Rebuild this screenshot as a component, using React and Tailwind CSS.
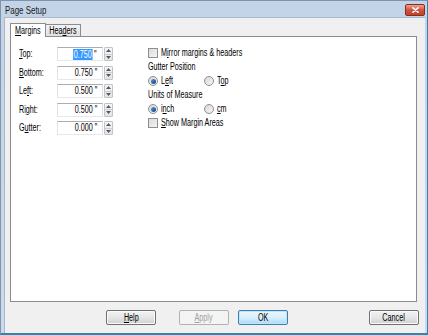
const font = "font-['Liberation_Sans',Arial,sans-serif]";

// text is drawn narrow like the original Tahoma dialog
function T({ children, o = "origin-left", className = "" }) {
  return (
    <span
      className={
        "inline-block whitespace-nowrap scale-x-[0.72] leading-none " + o + " " + className
      }
    >
      {children}
    </span>
  );
}

function U({ children }) {
  return <span className="underline underline-offset-[1px]">{children}</span>;
}

function Spinner() {
  return (
    <div className="ml-[1px] w-[9px] h-[14px] flex flex-col border border-[#c3c3c3] rounded-[1px] bg-gradient-to-b from-[#f6f6f6] to-[#e4e4e4]">
      <div className="flex-1 flex items-center justify-center border-b border-[#cfcfcf]">
        <svg width="5" height="3" viewBox="0 0 5 3">
          <path d="M0 3 L2.5 0 L5 3 Z" fill="#4a5a6a" />
        </svg>
      </div>
      <div className="flex-1 flex items-center justify-center">
        <svg width="5" height="3" viewBox="0 0 5 3">
          <path d="M0 0 L2.5 3 L5 0 Z" fill="#4a5a6a" />
        </svg>
      </div>
    </div>
  );
}

function Field({ label, value, selected }) {
  return (
    <div className="flex items-center h-[14px]">
      <span className="w-[38px] flex">
        <T>{label}</T>
      </span>
      <div className="w-[46px] h-[14px] bg-white border border-[#abadb3] border-l-[#e2e3ea] border-r-[#dbdfe6] border-b-[#e3e9ef] flex items-center justify-end pr-[5px]">
        {selected ? (
          <T o="origin-right" className="flex items-center">
            <span className="bg-[#3399ff] text-white px-[1px] leading-[11px]">{value}</span>
            <span className="w-[1.4px] h-[11px] bg-black mr-[2px]" />
            <span>"</span>
          </T>
        ) : (
          <T o="origin-right">{value} "</T>
        )}
      </div>
      <Spinner />
    </div>
  );
}

function Check({ children }) {
  return (
    <div className="flex items-center h-[14px]">
      <span className="w-[10px] h-[10px] shrink-0 border border-[#8e8f8f] bg-gradient-to-br from-[#dcdcdc] to-[#f4f4f4] mr-[3px]" />
      <T>{children}</T>
    </div>
  );
}

function Radio({ children, checked, w }) {
  return (
    <div className={"flex items-center " + (w || "")}>
      <span className="w-[10px] h-[10px] shrink-0 rounded-full border border-[#8e8f8f] bg-gradient-to-br from-[#d6d6d6] to-[#f8f8f8] mr-[3px] flex items-center justify-center">
        {checked && (
          <span className="w-[5px] h-[5px] rounded-full bg-gradient-to-br from-[#5aa0d8] to-[#0d3f7a]" />
        )}
      </span>
      <T>{children}</T>
    </div>
  );
}

function Button({ children, kind }) {
  const base =
    "w-[50px] h-[15px] rounded-[2px] border flex items-center justify-center";
  let look =
    " border-[#707070] bg-gradient-to-b from-[#f2f2f2] via-[#e6e6e6] to-[#d0d0d0] shadow-[inset_0_0_0_1px_#fafafa]";
  if (kind === "disabled")
    look = " border-[#adb2b5] bg-[#f4f4f4] text-[#a0a0a0]";
  if (kind === "default")
    look =
      " border-[#3c7fb1] bg-gradient-to-b from-[#eaf6fd] via-[#d9f0fc] to-[#a7d9f5] shadow-[inset_0_0_0_1px_#c3e4f7]";
  return (
    <div className={base + look}>
      <T o="origin-center">{children}</T>
    </div>
  );
}

export default function App() {
  return (
    <div
      className={
        "w-[428px] h-[335px] overflow-hidden flex flex-col bg-gradient-to-b from-[#c3d4e8] to-[#cbdaec] border-l border-t border-[#8094ac] border-r border-b-2 border-r-[#2f86ae] border-b-[#2f86ae] text-[10px] text-black " +
        font
      }
    >
      <div className="h-[16px] flex items-center justify-between pl-[4px] pr-[2px] shrink-0">
        <T className="text-[11px] text-[#1a1a1a] mt-[3px]">Page Setup</T>
        <div className="w-[20px] h-[12px] rounded-[2px] border border-[#8a2b20] bg-gradient-to-b from-[#e8a493] via-[#d0523a] to-[#c0432e] flex items-center justify-center mt-[2px]">
          <svg width="7" height="6" viewBox="0 0 7 6">
            <path
              d="M1 0.8 L6 5.2 M6 0.8 L1 5.2"
              stroke="white"
              strokeWidth="1.6"
              strokeLinecap="round"
            />
          </svg>
        </div>
      </div>

      <div className="flex-1 ml-[3px] mr-[2px] bg-[#f0f0f0] border-t border-l border-[#a9b9cc] flex flex-col pl-[5px] pt-[5px]">
        <div className="flex items-end h-[14px] relative z-10">
          <div className="w-[36px] h-[14px] bg-white border border-b-0 border-[#898c95] flex items-center justify-center">
            <T o="origin-center">
              <U>M</U>argins
            </T>
          </div>
          <div className="w-[35px] h-[12px] mb-[1px] bg-gradient-to-b from-[#f3f3f3] to-[#e1e1e1] border border-l-0 border-[#898c95] border-b-0 flex items-center justify-center">
            <T o="origin-center">
              Hea<U>d</U>ers
            </T>
          </div>
        </div>
        <div className="w-[407px] h-[266px] -mt-[1px] bg-white border border-[#898c95] flex pl-[8px]">
          <div className="w-[129px] pt-[10px] flex flex-col gap-[4.5px]">
            <Field label={<><U>T</U>op:</>} value="0.750" selected />
            <Field label={<><U>B</U>ottom:</>} value="0.750" />
            <Field label={<>Le<U>f</U>t:</>} value="0.500" />
            <Field label={<>Ri<U>g</U>ht:</>} value="0.500" />
            <Field label={<>G<U>u</U>tter:</>} value="0.000" />
          </div>
          <div className="pt-[9px] flex flex-col">
            <Check>
              M<U>i</U>rror margins &amp; headers
            </Check>
            <div className="h-[14px] flex items-center">
              <T>Gutter Position</T>
            </div>
            <div className="h-[14px] flex items-center">
              <Radio checked w="w-[56px]">
                L<U>e</U>ft
              </Radio>
              <Radio>
                T<U>o</U>p
              </Radio>
            </div>
            <div className="h-[14px] flex items-center">
              <T>Units of Measure</T>
            </div>
            <div className="h-[14px] flex items-center">
              <Radio checked w="w-[56px]">
                i<U>n</U>ch
              </Radio>
              <Radio>
                <U>c</U>m
              </Radio>
            </div>
            <Check>
              <U>S</U>how Margin Areas
            </Check>
          </div>
        </div>
        <div className="flex mt-[8px] pl-[96px]">
          <Button>
            <U>H</U>elp
          </Button>
          <div className="ml-[23px]">
            <Button kind="disabled">
              <U>A</U>pply
            </Button>
          </div>
          <div className="ml-[9px]">
            <Button kind="default">OK</Button>
          </div>
          <div className="ml-[81px]">
            <Button>Cancel</Button>
          </div>
        </div>
      </div>
    </div>
  );
}
